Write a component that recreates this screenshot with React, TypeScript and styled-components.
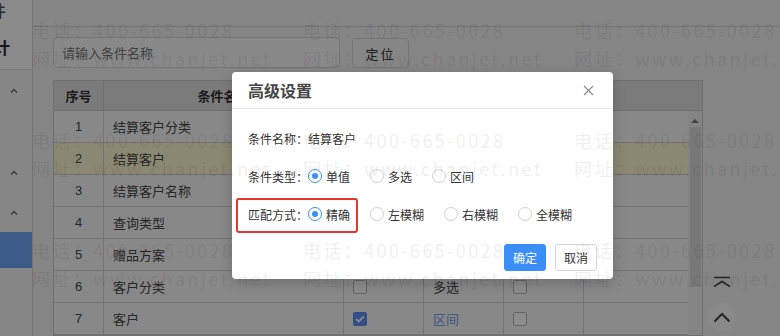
import React from "react";
import styled, { createGlobalStyle } from "styled-components";

const GlobalStyle = createGlobalStyle`
  html, body { margin: 0; padding: 0; }
  body {
    background: #f3f3f3;
    font-family: "Liberation Sans", "Noto Sans CJK SC", sans-serif;
  }
  *, *::before, *::after { box-sizing: border-box; }
`;

const COLS = "50px 240px 80px 80px 80px 1fr";

const Page = styled.div`
  position: relative;
  width: 780px;
  height: 336px;
  overflow: hidden;
  display: flex;
  background: #f3f3f3;
  color: #4a4a4a;
`;

// 왼쪽 메뉴
const Sidebar = styled.aside`
  width: 33px;
  flex-shrink: 0;
  border-right: 1px solid #d4d4d4;
  background: #f4f4f4;
  overflow: hidden;
`;

const SideHead = styled.div`
  height: 70px;
  background: #fcfcfc;
  border-bottom: 1px solid #e4e4e4;
`;

const SideTitle = styled.div<{ $shift: number; $strong?: boolean }>`
  margin-left: ${(p) => p.$shift}px;
  margin-top: ${(p) => (p.$strong ? 17 : 0)}px;
  font-family: "Noto Sans CJK SC", sans-serif;
  font-size: 16px;
  line-height: 20px;
  font-weight: ${(p) => (p.$strong ? 700 : 500)};
  color: ${(p) => (p.$strong ? "#2c2c2c" : "#555")};
  white-space: nowrap;
`;

const SideItem = styled.div`
  height: 40px;
  display: flex;
  align-items: center;
  padding-left: 10px;
`;

const SideGap = styled.div`
  height: 42px;
`;

const SideActive = styled.div`
  height: 36px;
  background: #6ea6f6;
`;

const Content = styled.div`
  flex: 1;
  display: flex;
  flex-direction: column;
`;

const TopBar = styled.div`
  height: 30px;
  border-bottom: 1px solid #d2d2d2;
`;

const Main = styled.main`
  padding: 10px 77px 0 20px;
`;

const SearchRow = styled.div`
  display: flex;
  align-items: flex-start;
  gap: 12px;
`;

const SearchInput = styled.input`
  width: 287px;
  height: 31px;
  border: 1px solid #d6d6d6;
  border-radius: 4px;
  background: #f7f7f7;
  padding: 0 8px;
  font-family: "Noto Sans CJK SC", sans-serif;
  font-size: 13px;
  color: #333;
  &::placeholder { color: #777; }
`;

const LocateButton = styled.button`
  width: 57px;
  height: 30px;
  margin-top: 1px;
  border: 1px solid #d6d6d6;
  border-radius: 4px;
  background: #f5f5f5;
  font-family: "Noto Sans CJK SC", sans-serif;
  font-size: 13px;
  letter-spacing: 2px;
  color: #333;
`;

const TableWrap = styled.div`
  margin-top: 12px;
  border: 1px solid #cdcdcd;
  background: #f7f7f7;
`;

const HeadRow = styled.div`
  display: grid;
  grid-template-columns: ${COLS};
  height: 30px;
  background: #e1e1e1;
  border-bottom: 1px solid #cdcdcd;
`;

const HeadCell = styled.div`
  display: flex;
  align-items: center;
  justify-content: center;
  border-right: 1px solid #cdcdcd;
  font-size: 13px;
  font-weight: 700;
  color: #333;
  &:last-child { border-right: none; }
`;

const BodyArea = styled.div`
  display: flex;
`;

const Rows = styled.div`
  flex: 1;
`;

const Row = styled.div<{ $active?: boolean }>`
  display: grid;
  grid-template-columns: ${COLS};
  height: 32px;
  border-bottom: 1px solid #d2d2d2;
  background: ${(p) => (p.$active ? "#fbf6cf" : "#f7f7f7")};
`;

const Cell = styled.div<{ $center?: boolean; $link?: boolean }>`
  display: flex;
  align-items: center;
  justify-content: ${(p) => (p.$center ? "center" : "flex-start")};
  padding: 0 9px;
  border-right: 1px solid #d2d2d2;
  font-size: 13px;
  color: ${(p) => (p.$link ? "#7c9ff0" : "#484848")};
  &:last-child { border-right: none; }
`;

const Check = styled.span<{ $on?: boolean }>`
  width: 14px;
  height: 14px;
  border-radius: 2px;
  border: 1px solid ${(p) => (p.$on ? "#5b92f2" : "#b9b9b9")};
  background: ${(p) => (p.$on ? "#5b92f2" : "#fff")};
  display: flex;
  align-items: center;
  justify-content: center;
`;

const ScrollTrack = styled.div`
  width: 14px;
  background: #f1f1f1;
  display: flex;
  flex-direction: column;
  align-items: center;
`;

const ScrollArrow = styled.div`
  margin-top: 8px;
  width: 0;
  height: 0;
  border-left: 4px solid transparent;
  border-right: 4px solid transparent;
  border-bottom: 4px solid #7a7a7a;
`;

const ScrollThumb = styled.div`
  margin-top: 4px;
  width: 11px;
  height: 160px;
  background: #dadada;
`;

const FloatTools = styled.div`
  position: absolute;
  left: 708px;
  top: 272px;
  width: 28px;
  display: flex;
  flex-direction: column;
  align-items: center;
  gap: 9px;
`;

const ToTop = styled.div`
  height: 22px;
  display: flex;
  align-items: center;
`;

const RoundUp = styled.div`
  width: 28px;
  height: 28px;
  border-radius: 50%;
  background: #fafafa;
  display: flex;
  align-items: center;
  justify-content: center;
`;

const Mask = styled.div`
  position: absolute;
  inset: 0;
  z-index: 10;
  background: rgba(0, 0, 0, 0.45);
`;

// 모달
const Modal = styled.div`
  position: absolute;
  left: 232px;
  top: 72px;
  width: 381px;
  z-index: 20;
  background: #fff;
  border-radius: 4px;
  box-shadow: 0 4px 14px rgba(0, 0, 0, 0.18);
  font-family: "Noto Sans CJK SC", "Liberation Sans", sans-serif;
  color: #333;
`;

const ModalHead = styled.div`
  height: 37px;
  display: flex;
  align-items: center;
  justify-content: space-between;
  padding: 0 19px 0 16px;
  border-bottom: 1px solid #e6e6e6;
`;

const ModalTitle = styled.div`
  font-size: 16px;
  font-weight: 700;
  color: #454545;
`;

const ModalBody = styled.div`
  padding: 10px 16px 8px;
`;

const FormRow = styled.div`
  height: 38px;
  display: flex;
  align-items: center;
  font-size: 12px;
`;

const Option = styled.label`
  display: inline-flex;
  align-items: center;
  gap: 4px;
  margin-right: 20px;
`;

const Radio = styled.span<{ $on?: boolean }>`
  position: relative;
  width: 14px;
  height: 14px;
  border-radius: 50%;
  border: 1px solid ${(p) => (p.$on ? "#3a8ef6" : "#d2d2d2")};
  background: #fff;
  &::after {
    content: "";
    display: ${(p) => (p.$on ? "block" : "none")};
    position: absolute;
    left: 3px;
    top: 3px;
    width: 6px;
    height: 6px;
    border-radius: 50%;
    background: #3a8ef6;
  }
`;

const Footer = styled.div`
  margin-top: 11px;
  display: flex;
  justify-content: flex-end;
  gap: 9px;
`;

const Button = styled.button<{ $primary?: boolean }>`
  height: 27px;
  padding: 0 8px;
  border-radius: 3px;
  border: 1px solid ${(p) => (p.$primary ? "#3a8ef6" : "#d6d6d6")};
  background: ${(p) => (p.$primary ? "#3a8ef6" : "#fff")};
  color: ${(p) => (p.$primary ? "#fff" : "#333")};
  font-family: "Noto Sans CJK SC", sans-serif;
  font-size: 12px;
`;

const Annotation = styled.div`
  position: absolute;
  left: 4px;
  top: 126px;
  width: 122px;
  height: 35px;
  border: 2px solid #e5362e;
  border-radius: 3px;
`;

const Watermark = styled.div`
  position: absolute;
  inset: 0;
  z-index: 30;
  pointer-events: none;
  display: grid;
  grid-template-columns: repeat(3, 271px);
  grid-auto-rows: 110px;
  padding: 16px 0 0 32px;
  font-family: "Noto Sans CJK SC", sans-serif;
  font-size: 18px;
  line-height: 28px;
  letter-spacing: 2.4px;
  color: rgba(0, 0, 0, 0.08);
  white-space: nowrap;
`;

const UpChevron = () => (
  <svg width="8" height="5" viewBox="0 0 8 5">
    <path d="M1 4.5 4 1.5 7 4.5" fill="none" stroke="#6a6a6a" strokeWidth="1.3" />
  </svg>
);

const Tick = () => (
  <svg width="10" height="8" viewBox="0 0 10 8">
    <path d="M1.2 4 3.8 6.4 8.8 1.4" fill="none" stroke="#fff" strokeWidth="1.8" />
  </svg>
);

const rows = [
  { no: 1, name: "结算客户分类", show: false, type: "单值", req: false },
  { no: 2, name: "结算客户", show: true, type: "单值", req: false },
  { no: 3, name: "结算客户名称", show: false, type: "单值", req: false },
  { no: 4, name: "查询类型", show: true, type: "单值", req: false },
  { no: 5, name: "赠品方案", show: false, type: "单值", req: false },
  { no: 6, name: "客户分类", show: false, type: "多选", req: false },
  { no: 7, name: "客户", show: true, type: "区间", req: false },
];

function App() {
  return (
    <Page>
      <GlobalStyle />
      <Sidebar>
        <SideHead>
          <SideTitle $shift={-26}>条件</SideTitle>
          <SideTitle $shift={-22} $strong>
            设计
          </SideTitle>
        </SideHead>
        <SideItem><UpChevron /></SideItem>
        <SideGap />
        <SideItem><UpChevron /></SideItem>
        <SideItem><UpChevron /></SideItem>
        <SideActive />
      </Sidebar>

      <Content>
        <TopBar />
        <Main>
          <SearchRow>
            <SearchInput placeholder="请输入条件名称" />
            <LocateButton>定位</LocateButton>
          </SearchRow>
          <TableWrap>
            <HeadRow>
              <HeadCell>序号</HeadCell>
              <HeadCell>条件名称</HeadCell>
              <HeadCell>是否显示</HeadCell>
              <HeadCell>类型</HeadCell>
              <HeadCell>必填</HeadCell>
              <HeadCell />
            </HeadRow>
            <BodyArea>
              <Rows>
                {rows.map((r) => (
                  <Row key={r.no} $active={r.no === 2}>
                    <Cell $center>{r.no}</Cell>
                    <Cell>{r.name}</Cell>
                    <Cell>
                      <Check $on={r.show}>{r.show && <Tick />}</Check>
                    </Cell>
                    <Cell $link={r.type === "区间"}>{r.type}</Cell>
                    <Cell>
                      <Check $on={r.req} />
                    </Cell>
                    <Cell />
                  </Row>
                ))}
              </Rows>
              <ScrollTrack>
                <ScrollArrow />
                <ScrollThumb />
              </ScrollTrack>
            </BodyArea>
          </TableWrap>
        </Main>
      </Content>

      <FloatTools>
        <ToTop>
          <svg width="20" height="14" viewBox="0 0 20 14">
            <path d="M2 1.5h16" stroke="#4a4a4a" strokeWidth="1.6" />
            <path d="M2 10.5 10 5.5 18 10.5" fill="none" stroke="#4a4a4a" strokeWidth="1.6" />
          </svg>
        </ToTop>
        <RoundUp>
          <svg width="18" height="11" viewBox="0 0 18 11">
            <path d="M1.5 9.5 9 2 16.5 9.5" fill="none" stroke="#444" strokeWidth="2" />
          </svg>
        </RoundUp>
      </FloatTools>

      <Mask />

      <Modal>
        <ModalHead>
          <ModalTitle>高级设置</ModalTitle>
          <svg width="11" height="11" viewBox="0 0 11 11">
            <path d="M1 1l9 9M10 1l-9 9" stroke="#8a8a8a" strokeWidth="1.2" />
          </svg>
        </ModalHead>
        <ModalBody>
          <FormRow>条件名称：结算客户</FormRow>
          <FormRow>
            条件类型：
            <Option><Radio $on />单值</Option>
            <Option><Radio />多选</Option>
            <Option><Radio />区间</Option>
          </FormRow>
          <FormRow>
            匹配方式：
            <Option><Radio $on />精确</Option>
            <Option><Radio />左模糊</Option>
            <Option><Radio />右模糊</Option>
            <Option><Radio />全模糊</Option>
          </FormRow>
          <Footer>
            <Button $primary>确定</Button>
            <Button>取消</Button>
          </Footer>
        </ModalBody>
        <Annotation />
      </Modal>

      <Watermark>
        {Array.from({ length: 9 }).map((_, i) => (
          <div key={i}>
            电话：400-665-0028
            <br />
            网址：www.chanjet.net
          </div>
        ))}
      </Watermark>
    </Page>
  );
}

export default App;
